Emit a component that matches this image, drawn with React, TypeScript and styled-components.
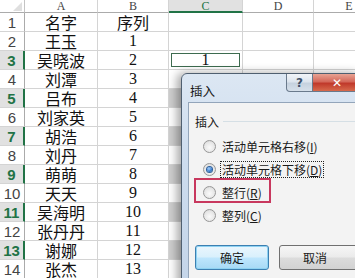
import React from "react";
import styled, { createGlobalStyle, css } from "styled-components";

const Global = createGlobalStyle`
  html, body { margin: 0; padding: 0; background: #fff; overflow: hidden; }
  #root { width: 355px; height: 278px; overflow: hidden; position: relative; }
`;

const COLS = "25px 73px 71px 74px 71px 71px";

const Sheet = styled.div`
  position: relative;
  width: 355px;
  height: 278px;
  overflow: hidden;
`;

const Grid = styled.div`
  display: grid;
  grid-template-columns: ${COLS};
  grid-template-rows: 13px repeat(14, 19px);
`;

const Corner = styled.div`
  position: relative;
  background: #fff;
  border-right: 1px solid #c4c4c4;
  border-bottom: 1px solid #ababab;
  &::after {
    content: "";
    position: absolute;
    right: 2px;
    bottom: 1px;
    border-left: 9px solid transparent;
    border-bottom: 9px solid #dfdfdf;
  }
`;

const ColHead = styled.div<{ $sel?: boolean }>`
  display: flex;
  align-items: center;
  justify-content: center;
  font-family: "Liberation Serif", serif;
  font-size: 12px;
  line-height: 1;
  color: #444;
  background: #fff;
  border-right: 1px solid #d4d4d4;
  border-bottom: 1px solid #ababab;
  overflow: hidden;
  ${(p) =>
    p.$sel &&
    css`
      background: #e1e1e1;
      color: #217346;
      border-bottom: 2px solid #217346;
    `}
`;

const RowHead = styled.div<{ $sel?: boolean }>`
  display: flex;
  align-items: center;
  justify-content: center;
  font-family: "Liberation Sans", sans-serif;
  font-size: 15px;
  color: #444;
  background: #fff;
  border-right: 1px solid #ababab;
  border-bottom: 1px solid #d4d4d4;
  ${(p) =>
    p.$sel &&
    css`
      background: #e1e1e1;
      color: #217346;
      font-weight: bold;
      border-right: 2px solid #217346;
    `}
`;

const Cell = styled.div<{ $shade?: boolean; $active?: boolean }>`
  display: flex;
  align-items: center;
  justify-content: center;
  font-family: "Liberation Serif", "Noto Sans CJK SC", serif;
  font-size: 16px;
  color: #111;
  background: ${(p) => (p.$shade ? "#cfcfcf" : "#fff")};
  border-right: 1px solid #d4d4d4;
  border-bottom: 1px solid #d4d4d4;
  overflow: hidden;
  white-space: nowrap;
  ${(p) =>
    p.$active &&
    css`
      box-shadow: inset 0 0 0 2px #fff, inset 0 0 0 3px #3d6b4f;
    `}
`;

/* ---------- dialog ---------- */

const Dialog = styled.div`
  position: absolute;
  left: 181px;
  top: 73px;
  width: 182px;
  height: 230px;
  box-sizing: border-box;
  border: 1px solid #4f5f70;
  border-radius: 6px 6px 0 0;
  background: linear-gradient(180deg, #dce7f3 0%, #cddcee 40%, #c3d4e8 100%);
  box-shadow: -4px 0 10px rgba(0, 0, 0, 0.35);
  display: flex;
  flex-direction: column;
  padding: 0 0 0 6px;
`;

const TitleBar = styled.div`
  height: 28px;
  display: flex;
  align-items: flex-start;
`;

const Title = styled.div`
  font-family: "Noto Sans CJK SC", sans-serif;
  font-size: 12.5px;
  color: #1a1a1a;
  margin-top: 7px;
  margin-left: 2px;
  flex: 1;
`;

const CapBtn = styled.div<{ $close?: boolean }>`
  height: 18px;
  width: ${(p) => (p.$close ? "49px" : "27px")};
  box-sizing: border-box;
  border: 1px solid #6a7a8c;
  border-top: none;
  display: flex;
  align-items: center;
  justify-content: center;
  font-family: "DejaVu Sans", sans-serif;
  font-weight: bold;
  font-size: 12px;
  ${(p) =>
    p.$close
      ? css`
          background: linear-gradient(180deg, #e8a393 0%, #d4685a 45%, #c0392b 55%, #d76a4c 100%);
          color: #fff;
          border-left: none;
        `
      : css`
          background: linear-gradient(180deg, #f1f4f8 0%, #dde5ee 45%, #c6d2df 55%, #d6e0ea 100%);
          color: #3e5168;
          border-radius: 0 0 0 4px;
        `}
`;

const Panel = styled.div`
  flex: 1;
  background: #f3f3f3;
  border: 1px solid #93a5ba;
  border-right: none;
  border-bottom: none;
  padding: 11px 0 0 6px;
  display: flex;
  flex-direction: column;
  font-family: "Noto Sans CJK SC", sans-serif;
  font-size: 12px;
  color: #1a1a1a;
`;

const GroupHead = styled.div`
  display: flex;
  align-items: center;
  height: 14px;
  gap: 4px;
  &::after {
    content: "";
    flex: 1;
    height: 1px;
    background: #d5dfe5;
  }
`;

const Options = styled.div`
  display: flex;
  flex-direction: column;
  margin-top: 7px;
  padding-left: 8px;
`;

const Option = styled.div<{ $mark?: boolean }>`
  position: relative;
  height: 23px;
  display: flex;
  align-items: center;
  gap: 4px;
  ${(p) =>
    p.$mark &&
    css`
      &::before {
        content: "";
        position: absolute;
        left: -9px;
        top: -3px;
        width: 77px;
        height: 25px;
        box-sizing: border-box;
        border: 2px solid #c8385e;
      }
    `}
`;

const Radio = styled.span<{ $on?: boolean }>`
  width: 13px;
  height: 13px;
  box-sizing: border-box;
  border-radius: 50%;
  border: 1px solid #979797;
  background: radial-gradient(circle at 50% 60%, #fafafa 0%, #e6e6e6 60%, #cfcfcf 100%);
  display: flex;
  align-items: center;
  justify-content: center;
  flex: none;
  &::after {
    content: "";
    width: 5px;
    height: 5px;
    border-radius: 50%;
    display: ${(p) => (p.$on ? "block" : "none")};
    background: radial-gradient(circle at 40% 35%, #a8d3ff 0%, #3b7fd0 55%, #164d94 100%);
    box-shadow: 0 0 0 1px #2d5f9a;
  }
`;

const Label = styled.span<{ $focus?: boolean }>`
  padding: 0 1px;
  line-height: 15px;
  border: 1px dotted ${(p) => (p.$focus ? "#222" : "transparent")};
`;

const Key = styled.span`
  text-decoration: underline;
`;

const Buttons = styled.div`
  display: flex;
  gap: 10px;
  margin-top: 18px;
`;

const Button = styled.div<{ $def?: boolean }>`
  width: ${(p) => (p.$def ? "74px" : "84px")};
  height: 25px;
  box-sizing: border-box;
  flex: none;
  border-radius: 3px;
  display: flex;
  align-items: center;
  justify-content: ${(p) => (p.$def ? "center" : "flex-start")};
  padding-left: ${(p) => (p.$def ? "0" : "23px")};
  background: linear-gradient(180deg, #f6f6f6 0%, #ebebeb 48%, #dcdcdc 52%, #d2d2d2 100%);
  border: 1px solid ${(p) => (p.$def ? "#3c7fb1" : "#707070")};
  ${(p) =>
    p.$def &&
    css`
      box-shadow: inset 0 0 0 1px #8ed2f2;
      background: linear-gradient(180deg, #eaf6fd 0%, #d9f0fc 48%, #bee6fd 52%, #a7d9f5 100%);
    `}
`;

const names = ["名字", "王玉", "吴晓波", "刘潭", "吕布", "刘家英", "胡浩", "刘丹", "萌萌", "天天", "吴海明", "张丹丹", "谢娜", "张杰"];
const nums = ["序列", "1", "2", "3", "4", "5", "6", "7", "8", "9", "10", "11", "12", "13"];
const selRows = new Set([3, 5, 7, 9, 11, 13]);

export default function App() {
  return (
    <>
      <Global />
      <Sheet>
        <Grid>
          <Corner />
          <ColHead>A</ColHead>
          <ColHead>B</ColHead>
          <ColHead $sel>C</ColHead>
          <ColHead>D</ColHead>
          <ColHead>E</ColHead>
          {names.map((n, i) => {
            const r = i + 1;
            const sel = selRows.has(r);
            return (
              <React.Fragment key={r}>
                <RowHead $sel={sel}>{r}</RowHead>
                <Cell>{n}</Cell>
                <Cell>{nums[i]}</Cell>
                <Cell $shade={sel && r !== 3} $active={r === 3}>
                  {r === 3 ? "1" : ""}
                </Cell>
                <Cell />
                <Cell />
              </React.Fragment>
            );
          })}
        </Grid>
        <Dialog>
          <TitleBar>
            <Title>插入</Title>
            <CapBtn>?</CapBtn>
            <CapBtn $close>✕</CapBtn>
          </TitleBar>
          <Panel>
            <GroupHead>插入</GroupHead>
            <Options>
              <Option>
                <Radio />
                <Label>
                  活动单元格右移(<Key>I</Key>)
                </Label>
              </Option>
              <Option>
                <Radio $on />
                <Label $focus>
                  活动单元格下移(<Key>D</Key>)
                </Label>
              </Option>
              <Option $mark>
                <Radio />
                <Label>
                  整行(<Key>R</Key>)
                </Label>
              </Option>
              <Option>
                <Radio />
                <Label>
                  整列(<Key>C</Key>)
                </Label>
              </Option>
            </Options>
            <Buttons>
              <Button $def>确定</Button>
              <Button>取消</Button>
            </Buttons>
          </Panel>
        </Dialog>
      </Sheet>
    </>
  );
}
